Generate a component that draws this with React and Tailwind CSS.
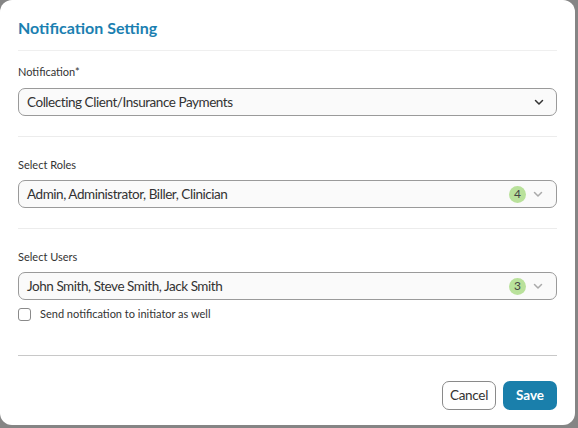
import React from "react";

function Chevron({ className }) {
  return (
    <svg width="12" height="12" viewBox="0 0 12 12" className={className} fill="none">
      <path d="M2.5 4.5 L6 8 L9.5 4.5" stroke="currentColor" strokeWidth="1.5" strokeLinecap="round" strokeLinejoin="round" />
    </svg>
  );
}

function MultiSelect({ text, count }) {
  return (
    <div className="flex h-[28px] items-center rounded-[7px] border border-[#9a9a9a] bg-[#fafafa] pl-[8px] pr-[12px]">
      <span className="flex-1 text-[13.5px] tracking-[-0.45px] text-[#333]">{text}</span>
      <span className="flex h-[17px] w-[17px] items-center justify-center rounded-full bg-[#b9e19b] text-[12px] text-[#444]">{count}</span>
      <Chevron className="ml-[6px] text-[#aaa]" />
    </div>
  );
}

export default function App() {
  return (
    <div className="h-[428px] w-[578px] bg-[#858585] pr-[3px] pb-[3px]" style={{ fontFamily: "Lato, 'Open Sans', sans-serif" }}>
      <div className="flex h-full w-full flex-col rounded-[12px] bg-white px-[18px]">
        <div className="pt-[18px] pb-[12px] text-[16px] leading-[20px] font-bold text-[#1b7fb1]">Notification Setting</div>
        <div className="h-px bg-[#efefef]" />
        <div className="pt-[13px] pb-[9px] text-[11px] leading-[15px] text-[#333]">Notification*</div>
        <div className="flex h-[28px] items-center rounded-[7px] border border-[#9a9a9a] bg-[#fafafa] pl-[8px] pr-[11px]">
          <span className="flex-1 text-[13.5px] tracking-[-0.45px] text-[#333]">Collecting Client/Insurance Payments</span>
          <Chevron className="text-[#333]" />
        </div>
        <div className="mt-[20px] h-px bg-[#ececec]" />
        <div className="pt-[20px] pb-[8px] text-[11px] leading-[15px] text-[#333]">Select Roles</div>
        <MultiSelect text="Admin, Administrator, Biller, Clinician" count="4" />
        <div className="mt-[20px] h-px bg-[#ececec]" />
        <div className="pt-[20px] pb-[8px] text-[11px] leading-[15px] text-[#333]">Select Users</div>
        <MultiSelect text="John Smith, Steve Smith, Jack Smith" count="3" />
        <label className="mt-[7px] flex h-[14px] items-center gap-[9px] text-[11px] leading-[14px] text-[#333]">
          <span className="h-[13px] w-[13px] rounded-[3px] border border-[#8a8a8a] bg-white" />
          Send notification to initiator as well
        </label>
        <div className="mt-[34px] h-px bg-[#c8c8c8]" />
        <div className="mt-[25px] flex justify-end gap-[7px]">
          <button className="h-[29px] w-[54px] rounded-[7px] border border-[#8a8a8a] bg-white text-[13.5px] tracking-[-0.3px] text-[#333]">Cancel</button>
          <button className="h-[29px] w-[54px] rounded-[7px] bg-[#1a7fab] text-[13.5px] font-bold text-white">Save</button>
        </div>
      </div>
    </div>
  );
}
